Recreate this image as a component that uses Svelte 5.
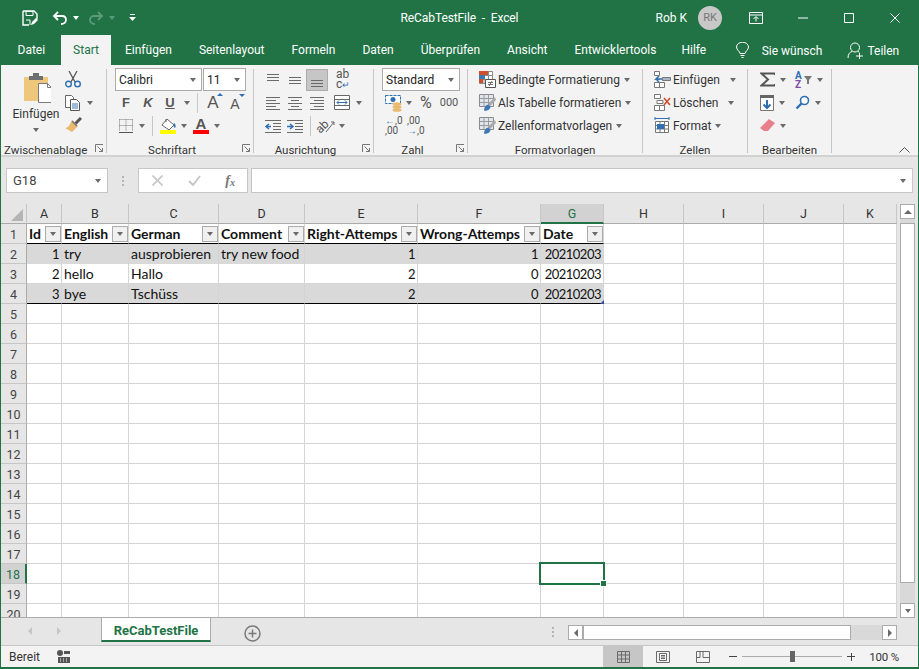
<script>
  const tabs = ["Datei", "Start", "Einfügen", "Seitenlayout", "Formeln", "Daten", "Überprüfen", "Ansicht", "Entwicklertools", "Hilfe"];

  const cols = ["A", "B", "C", "D", "E", "F", "G", "H", "I", "J", "K"];
  const head = ["Id", "English", "German", "Comment", "Right-Attemps", "Wrong-Attemps", "Date"];
  const data = [
    [1, "try", "ausprobieren", "try new food", 1, 1, 20210203],
    [2, "hello", "Hallo", "", 2, 0, 20210203],
    [3, "bye", "Tschüss", "", 2, 0, 20210203]
  ];
  const rowNums = Array.from({ length: 20 }, (_, i) => i + 1);

  const alignTop = [[5, 17, 5], [5, 17, 8], [5, 17, 11]];
  const alignMid = [[5, 17, 8], [5, 17, 11], [5, 17, 14]];
  const alignBot = [[5, 17, 11], [5, 17, 14], [5, 17, 17]];
  const alignL = [[4, 18, 5], [4, 14, 8], [4, 18, 11], [4, 14, 14], [4, 18, 17]];
  const alignC = [[4, 18, 5], [7, 15, 8], [4, 18, 11], [7, 15, 14], [4, 18, 17]];
  const alignR = [[4, 18, 5], [8, 18, 8], [4, 18, 11], [8, 18, 14], [4, 18, 17]];
</script>

{#snippet lines(rows)}
  <svg width="22" height="22" viewBox="0 0 22 22">
    {#each rows as [a, b, y]}
      <path d="M{a} {y + 0.5}H{b}" stroke="#6a6a6a" />
    {/each}
  </svg>
{/snippet}

{#snippet launcher()}
  <svg class="launch" width="9" height="9" viewBox="0 0 9 9">
    <path d="M.5 8V.5H8M2.5 2.5l5 5M7.5 4v3.5H4" fill="none" stroke="#777" />
  </svg>
{/snippet}

{#snippet tableIcon()}
  <svg width="17" height="17" viewBox="0 0 17 17">
    <path d="M.5 .5h14v12H.5z" fill="#dfe6ef" stroke="#8a8a8a" />
    <path d="M.5 4.500h14M.5 8.500h14M5 .5v12M9.500 .5v12" fill="none" stroke="#9a9a9a" />
    <path d="M16 3l-7 7 2 2 6-6z" fill="#a9a9a9" />
    <path d="M5 16.500c0-3 2-6 4.500-6l2 2c0 2.500-3 5-6.500 4z" fill="#3f78b5" />
  </svg>
{/snippet}

<div class="window">
  <header class="titlebar">
    <div class="qat">
      <svg width="16" height="16" viewBox="0 0 16 16">
        <path d="M1 1h11l3 3v5M1 1v14h6" fill="none" stroke="#fff" stroke-width="1.400" />
        <path d="M4 1.500h7v4H4zM4 10h4v5" fill="none" stroke="#fff" />
        <path d="M9 15l1-3 4-4 2 2-4 4z" fill="#fff" />
      </svg>
      <svg class="undo" width="16" height="14" viewBox="0 0 16 14">
        <path d="M2 5h8c3 0 4 2 4 4s-2 4-5 4" fill="none" stroke="#fff" stroke-width="1.800" />
        <path d="M6 1L2 5l4 4" fill="none" stroke="#fff" stroke-width="1.800" />
      </svg>
      <span class="caret white"></span>
      <svg class="redo" width="16" height="14" viewBox="0 0 16 14">
        <path d="M14 5H6C3 5 2 7 2 9s2 4 5 4M10 1l4 4-4 4" fill="none" stroke="#5c9a7b" stroke-width="1.800" />
      </svg>
      <span class="caret dim"></span>
      <svg class="custom" width="7" height="8" viewBox="0 0 7 8">
        <path d="M1 .5h5" stroke="#fff" />
        <path d="M0 3h7L3.500 7z" fill="#fff" />
      </svg>
    </div>
    <div class="title">ReCabTestFile&nbsp; -&nbsp; Excel</div>
    <div class="winctl">
      <span class="user">Rob K</span>
      <span class="avatar">RK</span>
      <svg class="display" width="14" height="12" viewBox="0 0 14 12">
        <path d="M.5 .5h13v11H.5zM.5 3h13" fill="none" stroke="#fff" />
        <path d="M7 9.500V5M4.500 7L7 4.500 9.500 7" fill="none" stroke="#fff" />
      </svg>
      <svg class="min" width="10" height="2" viewBox="0 0 10 2"><path d="M0 1h10" stroke="#fff" /></svg>
      <svg class="max" width="10" height="10" viewBox="0 0 10 10"><path d="M.5 .5h9v9H.5z" fill="none" stroke="#fff" /></svg>
      <svg class="close" width="10" height="10" viewBox="0 0 10 10"><path d="M.5 .5l9 9M9.500 .5l-9 9" stroke="#fff" /></svg>
    </div>
  </header>

  <nav class="tabs">
    {#each tabs as t, i}
      <span class="tab" class:active={i === 1}>{t}</span>
    {/each}
    <svg class="bulb" width="13" height="17" viewBox="0 0 13 17">
      <path d="M4 11.500c0-2-3.500-3.500-3.500-6.500a6 4.800 0 0 1 12 0C12.500 8 9 9.500 9 11.500zM4.500 13.500h4M5.500 15.500h2" fill="none" stroke="#fff" />
    </svg>
    <span class="tell">Sie wünsch</span>
    <svg class="person" width="17" height="17" viewBox="0 0 17 17">
      <circle cx="8" cy="5.500" r="4.500" fill="none" stroke="#fff" />
      <path d="M1 16c0-4 2-6 4-6.500M11 9.500l1 .5M9 14h7M12.500 10.500v6.500" fill="none" stroke="#fff" />
    </svg>
    <span class="share">Teilen</span>
  </nav>

  <section class="ribbon">
    <div class="group clip">
      <div class="body">
        <div class="paste">
          <svg width="30" height="32" viewBox="-2 0 30 32">
            <path d="M1 5h24v24H1z" fill="#eec67c" />
            <path d="M6 4h4V1h6v3h4v4H6z" fill="#6f6f6f" />
            <path d="M15.500 11.500h9l4 4v15h-13z" fill="#fff" stroke="#7a7a7a" />
            <path d="M24.500 11.500v4h4" fill="none" stroke="#7a7a7a" />
          </svg>
          <span class="paste-label">Einfügen</span>
          <span class="caret"></span>
        </div>
        <div class="clip-tools">
          <svg width="16" height="17" viewBox="0 0 16 17">
            <path d="M4 0l6 11M12 0L6 11" stroke="#555" stroke-width="1.300" />
            <circle cx="3.500" cy="13" r="2.800" fill="none" stroke="#2f6fb3" stroke-width="1.400" />
            <circle cx="12.500" cy="13" r="2.800" fill="none" stroke="#2f6fb3" stroke-width="1.400" />
          </svg>
          <span class="copy">
            <svg width="16" height="16" viewBox="0 0 16 16">
              <path d="M.5 .5h6l2 2v10H.5z" fill="#fff" stroke="#666" />
              <path d="M5.500 4.500h6l3 3v8h-9z" fill="#fff" stroke="#555" />
              <path d="M7 9h6M7 11h6M7 13h6" stroke="#3f78b5" />
            </svg>
            <span class="caret"></span>
          </span>
          <svg width="17" height="16" viewBox="0 0 17 16">
            <path d="M10 7l6-6" stroke="#555" stroke-width="3" />
            <path d="M7 3l6 6-6 6-7-4c3 0 5-3 7-8z" fill="#e9b96e" />
            <path d="M7 4l5 5" stroke="#777" stroke-width="1.500" />
          </svg>
        </div>
      </div>
      <div class="label">Zwischenablage</div>
      {@render launcher()}
    </div>

    <div class="group font">
      <div class="body stack">
        <div class="combos">
          <div class="combo fname">Calibri<span class="caret"></span></div>
          <div class="combo fsize">11<span class="caret"></span></div>
        </div>
        <div class="row fmt">
          <b class="glyph">F</b>
          <b class="glyph k">K</b>
          <b class="glyph u">U</b>
          <span class="caret"></span>
          <i class="vsep"></i>
          <span class="grow"><span class="big">A</span><i class="up"></i></span>
          <span class="grow small"><span class="big">A</span><i class="down"></i></span>
        </div>
        <div class="row fmt2">
          <svg width="14" height="14" viewBox="0 0 14 14">
            <path d="M.5 .5h13M.5 .5v12M13.500 .5v12M7 .5v12M.5 6.500h13" fill="none" stroke="#777" stroke-dasharray="1 1" />
            <path d="M0 13.500h14" stroke="#555" />
          </svg>
          <span class="caret"></span>
          <i class="vsep"></i>
          <span class="swatch">
            <svg width="17" height="13" viewBox="0 0 17 13">
              <path d="M7 1l7 6-5 5-7-5z" fill="#fff" stroke="#666" />
              <path d="M6 1v3" stroke="#666" />
              <path d="M14 5c2 1 2 4 1 5-2-1-2-3-1-5z" fill="#3f78b5" />
            </svg>
            <i class="bar yellow"></i>
          </span>
          <span class="caret"></span>
          <span class="swatch fcolor"><span class="big">A</span><i class="bar red"></i></span>
          <span class="caret"></span>
        </div>
      </div>
      <div class="label">Schriftart</div>
      {@render launcher()}
    </div>

    <div class="group align">
      <div class="body stack">
        <div class="row">
          {@render lines(alignTop)}
          {@render lines(alignMid)}
          <span class="pressed">{@render lines(alignBot)}</span>
          <span class="wrap"><span>ab</span><span>c<em>↵</em></span></span>
        </div>
        <div class="row">
          {@render lines(alignL)}
          {@render lines(alignC)}
          {@render lines(alignR)}
          <svg class="merge" width="16" height="15" viewBox="0 0 16 15">
            <path d="M.5 .5h15v14H.5zM.5 4.500h15M.5 10.500h15" fill="#fff" stroke="#666" />
            <path d="M3 7.500h10" stroke="#2f6fb3" />
            <path d="M5 5.500l-2 2 2 2M11 5.500l2 2-2 2" fill="none" stroke="#2f6fb3" />
          </svg>
          <span class="caret"></span>
        </div>
        <div class="row">
          <svg width="22" height="22" viewBox="0 0 22 22">
            <path d="M3 5.500h16M11 8.500h8M11 11.500h8M11 14.500h8M3 17.500h16" stroke="#6a6a6a" />
            <path d="M9 11.500H4M7 9l-3 2.500L7 14" fill="none" stroke="#2f6fb3" stroke-width="1.500" />
          </svg>
          <svg width="22" height="22" viewBox="0 0 22 22">
            <path d="M3 5.500h16M11 8.500h8M11 11.500h8M11 14.500h8M3 17.500h16" stroke="#6a6a6a" />
            <path d="M3 11.500h5M6 9l3 2.500L6 14" fill="none" stroke="#2f6fb3" stroke-width="1.500" />
          </svg>
          <i class="vsep"></i>
          <svg class="orient" width="18" height="16" viewBox="0 0 18 16">
            <text x="-1" y="12" transform="rotate(-45 6 9)" class="svgtxt">ab</text>
            <path d="M9 14L17 4M14 4h3v3" fill="none" stroke="#666" />
          </svg>
          <span class="caret"></span>
        </div>
      </div>
      <div class="label">Ausrichtung</div>
      {@render launcher()}
    </div>

    <div class="group zahl">
      <div class="body stack">
        <div class="combo numfmt">Standard<span class="caret"></span></div>
        <div class="row">
          <svg width="18" height="18" viewBox="0 0 18 18">
            <path d="M.5 1.500h15v8H.5z" fill="#fff" stroke="#2f6fb3" stroke-dasharray="3 1" />
            <circle cx="8" cy="5.500" r="2.500" fill="#2f6fb3" />
            <ellipse cx="12" cy="10" rx="4.500" ry="1.800" fill="#e9b96e" />
            <ellipse cx="12" cy="13" rx="4.500" ry="1.800" fill="#e9b96e" />
            <ellipse cx="12" cy="16" rx="4.500" ry="1.800" fill="#e9b96e" />
          </svg>
          <span class="caret"></span>
          <span class="pct">%</span>
          <span class="thou">000</span>
        </div>
        <div class="row decs">
          <span class="dec"><em>←</em>,0<br />,00</span>
          <span class="dec">,00<br /><em>→</em>,0</span>
        </div>
      </div>
      <div class="label">Zahl</div>
      {@render launcher()}
    </div>

    <div class="group styles">
      <div class="body stack">
        <div class="row item">
          <svg width="17" height="17" viewBox="0 0 17 17">
            <path d="M.5 .5h13v12H.5zM.5 4.500h13M.5 8.500h13M5 .5v12M9.500 .5v12" fill="#fff" stroke="#8a8a8a" />
            <path d="M0 0h9v4H0z" fill="#d0502c" />
            <path d="M0 4h6v4H0z" fill="#3f78b5" />
            <path d="M0 8h4v4H0z" fill="#d0502c" />
            <path d="M6.500 8.500h10v8h-10z" fill="#fff" stroke="#555" />
            <path d="M9 11.500h5M9 13.500h5M10 15l3-5" stroke="#555" stroke-width=".8" />
          </svg>
          Bedingte Formatierung<span class="caret"></span>
        </div>
        <div class="row item">{@render tableIcon()}Als Tabelle formatieren<span class="caret"></span></div>
        <div class="row item">{@render tableIcon()}Zellenformatvorlagen<span class="caret"></span></div>
      </div>
      <div class="label">Formatvorlagen</div>
    </div>

    <div class="group cells">
      <div class="body stack">
        <div class="row item ins">
          <svg width="17" height="17" viewBox="0 0 17 17">
            <path d="M.5 .5h5v4h-5zM.5 11.500h5v5h-5zM5.500 11.500h5v5h-5zM.5 8.500h5" fill="#fff" stroke="#777" />
            <path d="M8.500 6.500h8v3h-8z" fill="#a9b8c9" stroke="#777" />
            <path d="M8 8H2M5 5L2 8l3 3" fill="none" stroke="#2f6fb3" stroke-width="1.500" />
          </svg>
          Einfügen<span class="caret"></span>
        </div>
        <div class="row item del">
          <svg width="17" height="17" viewBox="0 0 17 17">
            <path d="M.5 .5h6v4h-6zM.5 11.500h5v5h-5zM5.500 11.500h5v5h-5zM3 6.500h6v3H3z" fill="#fff" stroke="#777" />
            <path d="M10 4l6 7M16 4l-6 7" stroke="#d0502c" stroke-width="1.600" />
          </svg>
          Löschen<span class="caret"></span>
        </div>
        <div class="row item">
          <svg width="17" height="17" viewBox="0 0 17 17">
            <path d="M1 1.500h14M1 0v3M15 0v3" stroke="#2f6fb3" />
            <path d="M1.500 4.500h13v11h-13zM1.500 8.500h13M1.500 12h13M6 4.500v11M10.500 4.500v11" fill="#fff" stroke="#777" />
            <path d="M3 7h7v5H3z" fill="#2f6fb3" />
          </svg>
          Format<span class="caret"></span>
        </div>
      </div>
      <div class="label">Zellen</div>
    </div>

    <div class="group edit">
      <div class="body edit-grid">
        <div class="row">
          <svg width="15" height="15" viewBox="0 0 15 15">
            <path d="M15 3V1.500H1.500L8 7.500 1.500 13.500H15V12" fill="none" stroke="#555" stroke-width="2" />
          </svg>
          <span class="caret"></span>
        </div>
        <div class="row">
          <span class="az"><span class="a">A</span><span class="z">Z</span></span>
          <svg width="8" height="8" viewBox="0 0 8 8"><path d="M0 0h8L5 4v4H3V4z" fill="#777" /></svg>
          <span class="caret"></span>
        </div>
        <div class="row">
          <svg width="14" height="16" viewBox="0 0 14 16">
            <path d="M.5 .5h13v15H.5z" fill="#fff" stroke="#777" />
            <path d="M0 0h14v3H0z" fill="#666" />
            <path d="M7 5v8M3.500 9.500L7 13l3.500-3.500" fill="none" stroke="#2f6fb3" stroke-width="2" />
          </svg>
          <span class="caret"></span>
        </div>
        <div class="row">
          <svg width="15" height="15" viewBox="0 0 15 15">
            <circle cx="9.500" cy="5.500" r="4" fill="#fff" stroke="#2f6fb3" stroke-width="1.600" />
            <path d="M6.500 8.500L1.500 13.500" stroke="#2f6fb3" stroke-width="2.400" />
          </svg>
          <span class="caret"></span>
        </div>
        <div class="row">
          <svg width="15" height="13" viewBox="0 0 15 13">
            <path d="M9 0l6 4-7 8H4L0 9z" fill="#e8808c" />
          </svg>
          <span class="caret"></span>
        </div>
      </div>
      <div class="label">Bearbeiten</div>
    </div>

    <svg class="collapse" width="11" height="6" viewBox="0 0 11 6"><path d="M.5 5.500l5-5 5 5" fill="none" stroke="#555" /></svg>
  </section>

  <section class="formula">
    <div class="namebox">G18<span class="caret"></span></div>
    <span class="dots"><i></i><i></i><i></i></span>
    <div class="fxbox">
      <svg width="11" height="11" viewBox="0 0 11 11"><path d="M.5 .5l10 10M10.500 .5l-10 10" stroke="#c6c6c6" stroke-width="1.600" /></svg>
      <svg width="13" height="11" viewBox="0 0 13 11"><path d="M1 6l4 4 7-9" fill="none" stroke="#c6c6c6" stroke-width="2" /></svg>
      <span class="fx">f<sub>x</sub></span>
    </div>
    <div class="input"><span class="caret"></span></div>
  </section>

  <section class="sheetwrap">
    <div class="sheet">
      <div class="corner">
        <svg width="12" height="12" viewBox="0 0 12 12"><path d="M12 0v12H0z" fill="#b4b4b4" /></svg>
      </div>
      {#each cols as c}
        <div class="colhead" class:sel={c === "G"}>{c}</div>
      {/each}

      {#each rowNums as r}
        <div class="rowhead" class:sel={r === 18}>{r}</div>
        {#each cols as c, ci}
          {@const inTable = ci < 7 && r <= 4}
          {@const val = r > 1 && inTable ? data[r - 2][ci] : ""}
          <div
            class="cell"
            class:th={r === 1 && inTable}
            class:band={inTable && (r === 2 || r === 4)}
            class:last={r === 4 && inTable}
            class:num={typeof val === "number"}
          >
            {#if r === 1 && inTable}
              <span>{head[ci]}</span>
              <i class="filter"><span class="caret"></span></i>
            {:else}
              {val}
            {/if}
            {#if r === 4 && ci === 6}<i class="resize"></i>{/if}
            {#if r === 18 && ci === 6}<i class="selbox"></i><i class="handle"></i>{/if}
          </div>
        {/each}
      {/each}
    </div>

    <div class="vscroll">
      <div class="sbtn"><i class="tri-up"></i></div>
      <div class="vthumb"></div>
      <div class="vtrack"></div>
      <div class="sbtn"><span class="caret"></span></div>
    </div>
  </section>

  <section class="sheetbar">
    <span class="nav-arrow left"></span>
    <span class="nav-arrow right"></span>
    <div class="sheettab">ReCabTestFile</div>
    <svg class="add" width="17" height="17" viewBox="0 0 17 17">
      <circle cx="8.500" cy="8.500" r="7.500" fill="none" stroke="#7a7a7a" stroke-width="1.500" />
      <path d="M4.500 8.500h8M8.500 4.500v8" stroke="#7a7a7a" stroke-width="1.500" />
    </svg>
    <span class="dots bar-dots"><i></i><i></i><i></i></span>
    <div class="hscroll">
      <div class="sbtn h"><i class="tri-left"></i></div>
      <div class="hthumb"></div>
      <div class="htrack"></div>
      <div class="sbtn h"><i class="tri-right"></i></div>
    </div>
  </section>

  <footer class="status">
    <span class="ready">Bereit</span>
    <svg class="macro" width="13" height="13" viewBox="0 0 13 13">
      <circle cx="3" cy="3" r="3" fill="#555" />
      <path d="M7 1h6v3H7zM1 7h12v6H1z" fill="#555" />
      <path d="M3 9h1M6 9h1M9 9h1M3 11h1M6 11h1M9 11h1" stroke="#f3f3f3" />
    </svg>
    <div class="views">
      <span class="view on">
        <svg width="13" height="12" viewBox="0 0 13 12"><path d="M.5 .5h12v11H.5zM.5 4h12M.5 8h12M4.500 .5v11M8.500 .5v11" fill="none" stroke="#6a6a6a" /></svg>
      </span>
      <span class="view">
        <svg width="14" height="12" viewBox="0 0 14 12"><path d="M.5 .5h13v11H.5z" fill="none" stroke="#6a6a6a" /><path d="M3.500 2.500h7v7h-7zM5 4.500h4M5 6h4M5 7.500h4" fill="none" stroke="#6a6a6a" /></svg>
      </span>
      <span class="view">
        <svg width="14" height="12" viewBox="0 0 14 12"><path d="M.5 .5h13v11H.5zM.5 6.500h3.500v-6M7 .5v6h6.500" fill="none" stroke="#6a6a6a" /></svg>
      </span>
    </div>
    <i class="minus"></i>
    <div class="slider"><i class="knob"></i></div>
    <i class="plus"></i>
    <span class="pctval">100 %</span>
  </footer>
</div>

<style>
  :global(body) {
    margin: 0;
    background: #e6e6e6;
  }

  .window {
    width: 919px;
    height: 669px;
    box-sizing: border-box;
    display: flex;
    flex-direction: column;
    border: 1px solid #217346;
    border-width: 0 1px 2px 1px;
    background: #e6e6e6;
    font-family: Roboto, "Noto Sans", sans-serif;
    font-size: 12px;
    color: #333;
    overflow: hidden;
  }

  svg {
    display: block;
    flex: none;
  }

  .caret {
    display: inline-block;
    flex: none;
    width: 0;
    height: 0;
    border: 3.500px solid transparent;
    border-bottom: 0;
    border-top: 4px solid #6a6a6a;
  }

  .caret.white {
    border-top-color: #fff;
  }

  .caret.dim {
    border-top-color: #5c9a7b;
  }

  /* title bar */
  .titlebar {
    height: 35px;
    flex: none;
    margin: 0 -1px;
    background: #217346;
    color: #fff;
    display: grid;
    grid-template-columns: 1fr auto 1fr;
    align-items: center;
  }

  .qat {
    display: flex;
    align-items: center;
    padding-left: 22px;
  }

  .undo {
    margin-left: 14px;
  }

  .qat .caret {
    margin-left: 5px;
  }

  .redo {
    margin-left: 9px;
  }

  .custom {
    margin-left: 14px;
  }

  .title {
    white-space: nowrap;
    padding-top: 1px;
    letter-spacing: -0.100px;
  }

  .winctl {
    display: flex;
    align-items: center;
    justify-content: flex-end;
    padding-right: 19px;
  }

  .user {
    margin-right: 11px;
  }

  .avatar {
    width: 24px;
    height: 24px;
    border-radius: 50%;
    background: #c8c8c8;
    color: #777;
    font-size: 11px;
    display: flex;
    align-items: center;
    justify-content: center;
  }

  .display {
    margin-left: 27px;
  }

  .min {
    margin-left: 35px;
  }

  .max {
    margin-left: 36px;
  }

  .close {
    margin-left: 36px;
  }

  /* tabs */
  .tabs {
    height: 30px;
    flex: none;
    margin: 0 -1px;
    background: #217346;
    color: #fff;
    display: flex;
    align-items: center;
    padding-left: 4px;
  }

  .tab {
    padding: 0 13.500px;
    height: 30px;
    line-height: 31px;
    white-space: nowrap;
  }

  .tab.active {
    background: #f3f3f3;
    color: #217346;
    padding: 0 12.500px;
    margin-left: 2px;
  }

  .tab:nth-child(10) {
    margin-left: -2px;
  }

  .bulb {
    margin-left: 16px;
  }

  .tell {
    margin-left: 13px;
    white-space: nowrap;
    padding-top: 1px;
  }

  .person {
    margin-left: 25px;
  }

  .share {
    margin-left: 3px;
    padding-top: 1px;
  }

  /* ribbon */
  .ribbon {
    height: 92px;
    flex: none;
    background: #f3f3f3;
    border-bottom: 2px solid #d2d2d2;
    box-sizing: border-box;
    display: flex;
    position: relative;
  }

  .group {
    position: relative;
    flex: none;
    height: 84px;
    margin-top: 4px;
    display: flex;
    flex-direction: column;
    box-sizing: border-box;
    border-right: 1px solid #c6c6c6;
  }

  .clip {
    width: 106px;
  }

  .font {
    width: 147px;
  }

  .align {
    width: 120px;
  }

  .zahl {
    width: 94px;
  }

  .styles {
    width: 175px;
  }

  .cells {
    width: 105px;
  }

  .edit {
    width: 84px;
  }

  .body {
    flex: 1;
    display: flex;
    min-height: 0;
    margin-top: -1px;
  }

  .stack {
    flex-direction: column;
  }

  .label {
    height: 18px;
    margin-bottom: -6px;
    line-height: 18px;
    text-align: center;
    white-space: nowrap;
    font-size: 11.500px;
  }

  .clip .label {
    text-align: left;
    padding-left: 3px;
  }

  .font .label,
  .align .label,
  .zahl .label {
    padding-right: 16px;
  }

  .launch {
    position: absolute;
    right: 2px;
    bottom: 0;
  }

  .row {
    height: 23px;
    flex: none;
    display: flex;
    align-items: center;
    white-space: nowrap;
  }

  .vsep {
    display: block;
    flex: none;
    width: 1px;
    height: 20px;
    background: #c6c6c6;
  }

  .combo {
    position: relative;
    box-sizing: border-box;
    height: 23px;
    line-height: 23px;
    background: #fff;
    border: 1px solid #ababab;
    padding-left: 3px;
    color: #222;
  }

  .combo .caret {
    position: absolute;
    right: 5px;
    top: 9px;
  }

  /* clipboard */
  .paste {
    width: 61px;
    box-sizing: border-box;
    padding: 4px 0 0 9px;
    display: flex;
    flex-direction: column;
    align-items: center;
  }

  .paste-label {
    margin-top: 1px;
    line-height: 18px;
  }

  .paste .caret {
    margin-top: 5px;
  }

  .clip-tools {
    display: flex;
    flex-direction: column;
    padding: 3px 0 3px 3px;
    height: 68px;
    justify-content: space-between;
    box-sizing: border-box;
  }

  .copy {
    display: flex;
    align-items: center;
    gap: 6px;
  }

  /* font */
  .combos {
    display: flex;
    gap: 1px;
    padding-left: 8px;
    height: 23px;
    flex: none;
  }

  .fname {
    width: 87px;
  }

  .fsize {
    width: 43px;
  }

  .fmt {
    padding-left: 8px;
  }

  .glyph {
    width: 22px;
    text-align: center;
    font-size: 13px;
    color: #555;
    font-family: "Liberation Sans", sans-serif;
  }

  .k {
    font-style: italic;
  }

  .u {
    text-decoration: underline;
  }

  .fmt > .caret {
    margin-left: 3px;
  }

  .fmt .vsep {
    margin: 0 4px 0 7px;
  }

  .grow {
    position: relative;
    width: 22px;
    display: flex;
    justify-content: center;
    font-size: 17px;
  }

  .grow.small {
    font-size: 14px;
    padding-top: 3px;
    box-sizing: border-box;
  }

  .big {
    font-family: "Liberation Sans", sans-serif;
    color: #555;
    line-height: 1;
  }

  .up,
  .down {
    position: absolute;
    right: 1px;
    top: -1px;
    width: 0;
    height: 0;
    border: 3px solid transparent;
  }

  .up {
    border-top: 0;
    border-bottom: 3px solid #2f6fb3;
  }

  .down {
    top: 0;
    border-bottom: 0;
    border-top: 3px solid #2f6fb3;
  }

  .fmt2 {
    padding-left: 12px;
  }

  .fmt2 > .caret {
    margin-left: 6px;
  }

  .fmt2 .vsep {
    margin: 0 7px 0 7px;
  }

  .swatch {
    position: relative;
    display: flex;
    flex-direction: column;
    width: 16px;
    align-items: center;
    height: 16px;
  }

  .swatch + .caret {
    margin-left: 5px;
  }

  .fcolor {
    margin-left: 6px;
    font-size: 15px;
  }

  .fcolor .big {
    margin-top: -2px;
    font-weight: bold;
  }

  .bar {
    position: absolute;
    left: 0;
    bottom: 0;
    width: 16px;
    height: 4px;
  }

  .yellow {
    background: #ffff00;
  }

  .red {
    background: #ff0000;
  }

  /* alignment */
  .align .body {
    padding-left: 8px;
  }

  .pressed {
    display: block;
    background: #c6c6c6;
    outline: 1px solid #ababab;
    outline-offset: -1px;
    height: 22px;
    width: 22px;
  }

  .wrap {
    margin-left: 8px;
    display: flex;
    flex-direction: column;
    font-size: 12px;
    line-height: 10px;
    color: #555;
  }

  .wrap em {
    color: #2f6fb3;
    font-style: normal;
    font-size: 9px;
  }

  .merge {
    margin-left: 6px;
    margin-right: 6px;
  }

  .align .row:last-child .vsep {
    margin: 0 6px 0 4px;
  }

  .orient {
    margin-right: 4px;
    overflow: visible;
  }

  .svgtxt {
    font-size: 12px;
    fill: #555;
  }

  /* numbers */
  .zahl .body {
    padding-left: 8px;
  }

  .numfmt {
    width: 78px;
    flex: none;
  }

  .zahl .row {
    padding-left: 3px;
  }

  .zahl .row .caret {
    margin-left: 3px;
  }

  .pct {
    font-size: 16px;
    margin-left: 8px;
    color: #555;
  }

  .thou {
    font-size: 11px;
    margin-left: 8px;
    color: #555;
  }

  .dec {
    display: block;
    width: 22px;
    font-size: 10px;
    line-height: 10px;
    color: #555;
    white-space: nowrap;
  }

  .dec em {
    color: #2f6fb3;
    font-style: normal;
  }

  /* styles, cells */
  .styles .body {
    padding-left: 11px;
  }

  .cells .body {
    padding-left: 11px;
  }

  .item {
    gap: 2px;
  }

  .item .caret {
    margin-left: 2px;
  }

  .ins .caret {
    margin-left: 8px;
  }

  .del .caret {
    margin-left: 8px;
  }

  /* editing */
  .edit-grid {
    display: grid;
    grid-template-columns: 35px 1fr;
    grid-auto-rows: 23px;
    padding-left: 12px;
  }

  .edit-grid .row {
    gap: 5px;
  }

  .az {
    display: flex;
    flex-direction: column;
    font-size: 10px;
    line-height: 9px;
    font-weight: bold;
    margin-right: -3px;
  }

  .a {
    color: #2f6fb3;
  }

  .z {
    color: #7f4fa8;
  }

  .collapse {
    position: absolute;
    right: 8px;
    bottom: 2px;
  }

  /* formula bar */
  .formula {
    height: 47px;
    flex: none;
    display: flex;
    align-items: center;
    padding: 0 5px;
    box-sizing: border-box;
  }

  .namebox,
  .fxbox,
  .input {
    box-sizing: border-box;
    height: 25px;
    background: #fff;
    border: 1px solid #c6c6c6;
    position: relative;
  }

  .namebox {
    width: 102px;
    line-height: 23px;
    padding-left: 6px;
    color: #444;
    font-size: 13px;
  }

  .namebox .caret,
  .input .caret {
    position: absolute;
    right: 6px;
    top: 10px;
  }

  .dots {
    display: flex;
    flex-direction: column;
    gap: 2px;
    width: 30px;
    align-items: center;
  }

  .dots i {
    width: 2px;
    height: 2px;
    background: #b4b4b4;
  }

  .fxbox {
    width: 110px;
    display: flex;
    align-items: center;
    justify-content: space-between;
    padding: 0 12px 0 13px;
  }

  .fx {
    font-family: "Liberation Serif", serif;
    font-style: italic;
    font-weight: bold;
    font-size: 14px;
    color: #777;
    line-height: 1;
  }

  .fx sub {
    font-size: 10px;
    vertical-align: -1px;
  }

  .input {
    flex: 1;
    margin-left: 3px;
  }

  /* sheet */
  .sheetwrap {
    height: 414px;
    flex: none;
    display: flex;
  }

  .sheet {
    flex: none;
    width: 896px;
    height: 414px;
    box-sizing: border-box;
    display: grid;
    grid-template-columns: 26px 35px 67px 90px 86px 113px 123px 63px 80px 80px 80px 53px;
    grid-template-rows: 20px repeat(20, 20px);
    background: #fff;
    overflow: hidden;
    border-bottom: 1px solid #ababab;
    font-family: Lato, "Open Sans", sans-serif;
    font-size: 14px;
    color: #111;
  }

  .corner {
    background: #e6e6e6;
    border-right: 1px solid #c6c6c6;
    border-bottom: 1px solid #ababab;
    display: flex;
    justify-content: flex-end;
    align-items: flex-end;
    padding: 0 3px 2px 0;
    box-sizing: border-box;
  }

  .colhead {
    background: #e6e6e6;
    color: #333;
    font-family: Roboto, sans-serif;
    font-size: 12.500px;
    text-align: center;
    line-height: 19px;
    border-right: 1px solid #c6c6c6;
    border-bottom: 1px solid #ababab;
    box-sizing: border-box;
  }

  .colhead.sel {
    background: #d2d2d2;
    color: #217346;
    border-bottom: 2px solid #217346;
  }

  .rowhead {
    background: #e6e6e6;
    color: #444;
    font-family: Roboto, sans-serif;
    font-size: 12.500px;
    text-align: center;
    line-height: 21px;
    border-right: 1px solid #ababab;
    border-bottom: 1px solid #c6c6c6;
    box-sizing: border-box;
  }

  .rowhead.sel {
    background: #d2d2d2;
    color: #217346;
    border-right: 2px solid #217346;
  }

  .cell {
    position: relative;
    box-sizing: border-box;
    border-right: 1px solid #d4d4d4;
    border-bottom: 1px solid #d4d4d4;
    padding: 0 2px;
    line-height: 20px;
    white-space: nowrap;
    min-width: 0;
  }

  .cell.num {
    text-align: right;
    font-size: 13px;
    letter-spacing: -0.500px;
  }

  .cell.th {
    font-weight: bold;
    border-bottom: 1px solid #000;
  }

  .cell.band {
    background: #d9d9d9;
    border-bottom-color: #d9d9d9;
  }

  .cell.last {
    border-bottom: 1px solid #000;
  }

  .filter {
    position: absolute;
    right: 0;
    top: 2px;
    width: 16px;
    height: 16px;
    box-sizing: border-box;
    background: #f0f0f0;
    border: 1px solid #ababab;
    display: flex;
    align-items: center;
    justify-content: center;
  }

  .resize {
    position: absolute;
    right: -1px;
    bottom: -1px;
    border: 2px solid transparent;
    border-right-color: #2f4e9a;
    border-bottom-color: #2f4e9a;
  }

  .selbox {
    position: absolute;
    left: -2px;
    top: -2px;
    width: 62px;
    height: 19px;
    border: 2px solid #217346;
    z-index: 2;
  }

  .handle {
    position: absolute;
    right: -3px;
    bottom: -3px;
    width: 5px;
    height: 5px;
    background: #217346;
    outline: 1px solid #fff;
    z-index: 3;
  }

  /* scrollbars */
  .vscroll {
    flex: none;
    width: 15px;
    margin-left: 3px;
    height: 414px;
    display: flex;
    flex-direction: column;
    background: #d9d9d9;
  }

  .sbtn {
    flex: none;
    height: 15px;
    box-sizing: border-box;
    background: #fff;
    border: 1px solid #ababab;
    display: flex;
    align-items: center;
    justify-content: center;
  }

  .vthumb {
    height: 360px;
    flex: none;
    background: #fff;
    border: 1px solid #ababab;
    box-sizing: border-box;
    margin-top: 4px;
  }

  .vtrack {
    flex: 1;
  }

  .tri-up,
  .tri-left,
  .tri-right {
    width: 0;
    height: 0;
    border: 4px solid transparent;
  }

  .tri-up {
    border-top: 0;
    border-bottom: 4px solid #6a6a6a;
  }

  .tri-left {
    border-left: 0;
    border-right: 4px solid #6a6a6a;
  }

  .tri-right {
    border-right: 0;
    border-left: 4px solid #6a6a6a;
  }

  .sheetbar {
    height: 28px;
    flex: none;
    display: flex;
    align-items: flex-start;
    border-bottom: 1px solid #c6c6c6;
    box-sizing: border-box;
  }

  .nav-arrow {
    width: 0;
    height: 0;
    border: 4px solid transparent;
    margin-top: 9px;
  }

  .nav-arrow.left {
    margin-left: 27px;
    border-left: 0;
    border-right: 4px solid #c6c6c6;
  }

  .nav-arrow.right {
    margin-left: 25px;
    border-right: 0;
    border-left: 4px solid #c6c6c6;
  }

  .sheettab {
    width: 110px;
    height: 24px;
    margin-left: 40px;
    box-sizing: border-box;
    background: #fff;
    border: 1px solid #ababab;
    border-top: 0;
    border-bottom: 2px solid #217346;
    font-weight: bold;
    color: #217346;
    text-align: center;
    line-height: 26px;
    font-size: 13px;
  }

  .add {
    margin: 7px 0 0 33px;
  }

  .bar-dots {
    width: 2px;
    margin: 9px 14px 0 291px;
  }

  .hscroll {
    width: 329px;
    height: 15px;
    margin-top: 7px;
    display: flex;
    background: #d9d9d9;
  }

  .sbtn.h {
    width: 15px;
    height: 15px;
  }

  .hthumb {
    width: 268px;
    flex: none;
    background: #fff;
    border: 1px solid #ababab;
    box-sizing: border-box;
  }

  .htrack {
    flex: 1;
  }

  .status {
    flex: 1;
    min-height: 0;
    background: #f3f3f3;
    display: flex;
    align-items: center;
    padding-right: 19px;
  }

  .ready {
    margin-left: 8px;
  }

  .macro {
    margin-left: 17px;
  }

  .views {
    margin-left: auto;
    display: flex;
    height: 100%;
  }

  .view {
    width: 40px;
    display: flex;
    align-items: center;
    justify-content: center;
  }

  .view.on {
    background: #c6c6c6;
  }

  .minus,
  .plus {
    position: relative;
    display: block;
    flex: none;
    width: 8px;
    height: 1px;
    background: #444;
    margin-left: 6px;
  }

  .plus {
    margin-left: 5px;
  }

  .plus::after {
    content: "";
    position: absolute;
    left: 3.500px;
    top: -3.500px;
    width: 1px;
    height: 8px;
    background: #444;
  }

  .slider {
    position: relative;
    flex: none;
    width: 100px;
    height: 1px;
    background: #ababab;
    margin-left: 5px;
  }

  .knob {
    position: absolute;
    left: 48px;
    top: -5px;
    width: 5px;
    height: 11px;
    background: #666;
  }

  .pctval {
    margin-left: 14px;
    white-space: nowrap;
    font-size: 11.500px;
    letter-spacing: -0.200px;
  }
</style>
